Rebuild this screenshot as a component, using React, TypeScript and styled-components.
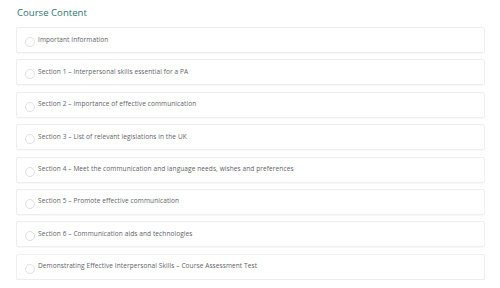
import React from "react";
import styled, { createGlobalStyle } from "styled-components";

const GlobalStyle = createGlobalStyle`
  html, body {
    margin: 0;
    padding: 0;
    background: #ffffff;
  }
`;

const Page = styled.div`
  padding: 6px 15px 0 16px;
  font-family: "Open Sans", "Liberation Sans", sans-serif;
`;

const Title = styled.h2`
  margin: 0 0 7px 1px;
  font-size: 9.6px;
  font-weight: 500;
  line-height: 14px;
  color: #2f7370;
`;

const List = styled.div`
  display: flex;
  flex-direction: column;
  gap: 6.4px;
`;

const Item = styled.div`
  height: 26px;
  box-sizing: border-box;
  display: flex;
  align-items: center;
  gap: 3px;
  padding: 0 7px 0 8px;
  border: 1px solid #eceef0;
  border-radius: 2px;
  background: #fff;
  box-shadow: 0 1px 1px rgba(0, 0, 0, 0.03);
`;

const Radio = styled.span`
  width: 8px;
  height: 8px;
  flex: none;
  border: 1px solid #dde1e5;
  border-radius: 50%;
  margin-top: 4px;
`;

const Label = styled.span`
  font-size: 6.5px;
  letter-spacing: 0.1px;
  color: #5d6166;
  margin-top: -2px;
`;

const items = [
  "Important Information",
  "Section 1 – Interpersonal skills essential for a PA",
  "Section 2 – Importance of effective communication",
  "Section 3 – List of relevant legislations in the UK",
  "Section 4 – Meet the communication and language needs, wishes and preferences",
  "Section 5 – Promote effective communication",
  "Section 6 – Communication aids and technologies",
  "Demonstrating Effective Interpersonal Skills – Course Assessment Test",
];

export default function App() {
  return (
    <>
      <GlobalStyle />
      <Page>
        <Title>Course Content</Title>
        <List>
          {items.map((text) => (
            <Item key={text}>
              <Radio />
              <Label>{text}</Label>
            </Item>
          ))}
        </List>
      </Page>
    </>
  );
}
